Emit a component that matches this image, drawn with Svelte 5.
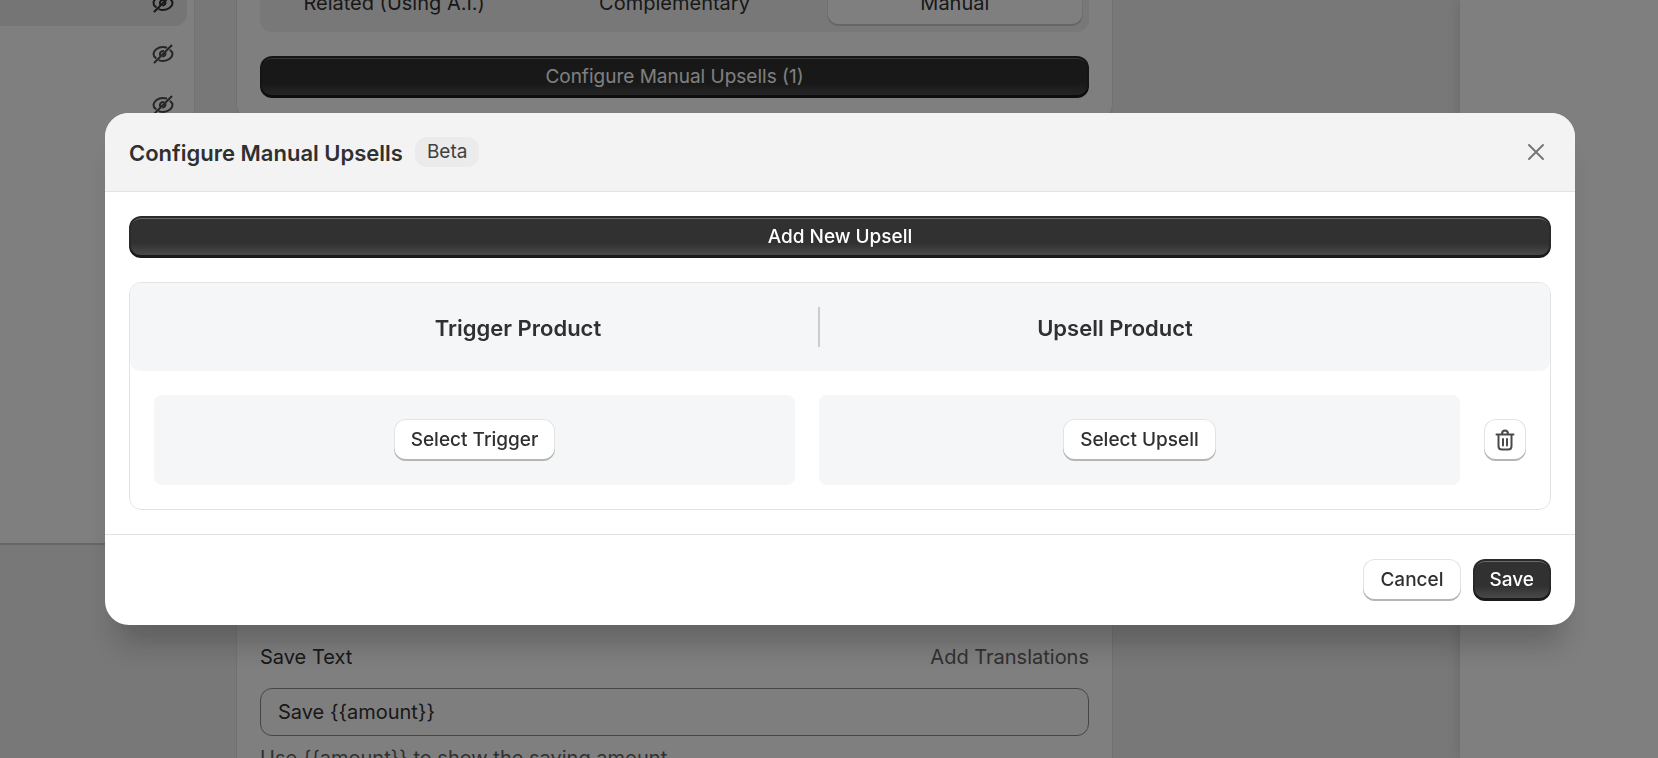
<script lang="ts">
  type Row = { id: number };

  const placements = ['Related (Using A.I.)', 'Complementary', 'Manual'];
  const blocks = [
    { id: 1, selected: true },
    { id: 2, selected: false },
    { id: 3, selected: false },
  ];

  let placement = $state('Manual');
  let saveText = $state('Save {{amount}}');
  let open = $state(true);
  let rows = $state<Row[]>([{ id: 1 }]);

  function addRow() {
    rows.push({ id: Date.now() });
  }

  function removeRow(id: number) {
    rows = rows.filter((row) => row.id !== id);
  }
</script>

<div class="page">
  <aside class="sidebar">
    <ul class="block-list">
      {#each blocks as block (block.id)}
        <li class="block" class:selected={block.selected}>
          <button class="icon-button" aria-label="Show block">
            <svg viewBox="0 0 22 20" width="22" height="20" fill="none" stroke="currentColor" stroke-width="2" stroke-linecap="round">
              <path d="M3.800 14C2.400 12.900 1.500 11.500 1.500 10C1.500 6.600 5.700 3 11 3c1.300 0 2.300.2 3.300.5" />
              <path d="M18.300 6.200C19.700 7.200 20.500 8.600 20.500 10c0 3.400-4.200 7-9.500 7-1.400 0-2.500-.2-3.600-.6" />
              <path d="M2.500 18.500 19.500 1.500" />
              <path d="M8 11c-.5-2.200 1-4 3.200-4" />
              <path d="M14 9c.5 2.300-1 4-3.200 4z" fill="currentColor" stroke-width="1" />
            </svg>
          </button>
        </li>
      {/each}
    </ul>
  </aside>

  <main class="editor">
    <section class="card placement-card">
      <div class="segments">
        {#each placements as name}
          <button class="segment" class:active={placement === name} onclick={() => (placement = name)}>
            {name}
          </button>
        {/each}
      </div>
      <button class="btn primary wide light" onclick={() => (open = true)}>
        Configure Manual Upsells ({rows.length})
      </button>
    </section>

    <section class="card text-card">
      <div class="label-row">
        <label for="save-text">Save Text</label>
        <a href="#translations">Add Translations</a>
      </div>
      <input id="save-text" type="text" bind:value={saveText} />
      <p class="help">Use {'{{amount}}'} to show the saving amount</p>
    </section>
  </main>

  <aside class="preview"></aside>
</div>

{#if open}
  <div class="backdrop">
    <div class="modal" role="dialog" aria-modal="true" aria-labelledby="modal-title">
      <header class="modal-header">
        <h2 id="modal-title">Configure Manual Upsells</h2>
        <span class="badge">Beta</span>
        <button class="icon-button close" aria-label="Close" onclick={() => (open = false)}>
          <svg viewBox="0 0 18 18" width="18" height="18" fill="none" stroke="currentColor" stroke-width="2" stroke-linecap="round">
            <path d="M2 2 16 16M16 2 2 16" />
          </svg>
        </button>
      </header>

      <div class="modal-body">
        <button class="btn primary wide" onclick={addRow}>Add New Upsell</button>

        <div class="upsells">
          <div class="upsells-head">
            <h3>Trigger Product</h3>
            <span class="divider"></span>
            <h3>Upsell Product</h3>
          </div>
          {#each rows as row (row.id)}
            <div class="upsell-row">
              <div class="slot"><button class="btn">Select Trigger</button></div>
              <div class="slot"><button class="btn">Select Upsell</button></div>
              <button class="btn trash" aria-label="Delete upsell" onclick={() => removeRow(row.id)}>
                <svg viewBox="0 0 20 22" width="20" height="22" fill="none" stroke="currentColor" stroke-width="2" stroke-linecap="round">
                  <path d="M1.500 5.500h17M7 5C7 2.900 8.300 1.500 10 1.500S13 2.900 13 5" />
                  <path d="M3.500 6v11c0 2.200 1.300 3.500 3.500 3.500h6c2.200 0 3.500-1.300 3.500-3.500V6" />
                  <path d="M8 10v6.500M12 10v6.500" />
                </svg>
              </button>
            </div>
          {/each}
        </div>
      </div>

      <footer class="modal-footer">
        <button class="btn" onclick={() => (open = false)}>Cancel</button>
        <button class="btn primary" onclick={() => (open = false)}>Save</button>
      </footer>
    </div>
  </div>
{/if}

<style>
  :global(body) {
    margin: 0;
    background: #f1f1f1;
  }

  .page,
  .backdrop {
    font-family: Inter, 'Liberation Sans', sans-serif;
    font-size: 20px;
    line-height: 24px;
    color: #303030;
  }

  .page *,
  .backdrop * {
    box-sizing: border-box;
  }

  .page {
    display: flex;
    height: 100vh;
    overflow: hidden;
  }

  button,
  input {
    font: inherit;
    color: inherit;
  }

  h2,
  h3,
  p,
  ul {
    margin: 0;
    padding: 0;
  }

  .sidebar {
    flex: 0 0 195px;
    align-self: flex-start;
    height: 545px;
    background: #fff;
    border-right: 1px solid #e6e6e6;
    border-bottom: 2px solid #cfcfcf;
  }

  /* scrolled so that the selected block is cut by the top edge */
  .block-list {
    display: flex;
    flex-direction: column;
    gap: 3px;
    margin-top: -22px;
    padding-right: 7px;
    list-style: none;
  }

  .block {
    display: flex;
    align-items: center;
    justify-content: flex-end;
    height: 48px;
    padding: 2px 13px 0 0;
    border-radius: 0 12px 12px 0;
    color: #4a4a4a;
  }

  .block.selected {
    background: #ebebeb;
    color: #303030;
  }

  .icon-button {
    display: flex;
    padding: 0;
    border: none;
    background: none;
    cursor: pointer;
  }

  .editor {
    flex: 1;
    display: flex;
    flex-direction: column;
    padding: 0 347px 0 41px;
  }

  .card {
    background: #fff;
    border-radius: 18px;
    padding: 24px;
    box-shadow: inset 0 0 0 1px #e3e3e3, 0 1px 0 #d4d4d4;
  }

  .placement-card {
    display: flex;
    flex-direction: column;
    gap: 24px;
    margin-top: -52px;
  }

  .segments {
    display: grid;
    grid-template-columns: repeat(3, 1fr);
    gap: 24px;
    padding: 6px;
    border-radius: 12px;
    background: #f1f1f1;
  }

  .segment {
    height: 48px;
    padding: 2px 12px 0;
    border: none;
    border-radius: 12px;
    background: none;
    font-size: 20px;
    cursor: pointer;
  }

  .segment.active {
    background: #fff;
    box-shadow: inset 0 -2px 0 #ccc, inset 0 0 0 1px #e3e3e3;
  }

  .text-card {
    flex: 0 0 auto;
    margin-top: 476px;
    padding-top: 47px;
  }

  .label-row {
    display: flex;
    justify-content: space-between;
    margin-bottom: 19px;
  }

  .label-row a {
    color: #616161;
    text-decoration: none;
  }

  input {
    display: block;
    width: 100%;
    height: 48px;
    padding: 0 17px;
    border: 1px solid #8a8a8a;
    border-radius: 12px;
    background: #fdfdfd;
  }

  .help {
    margin-top: 10px;
    color: #616161;
  }

  .preview {
    flex: 0 0 198px;
    background: #fff;
    box-shadow: 0 0 14px rgba(0, 0, 0, 0.15);
  }

  .backdrop {
    position: fixed;
    inset: 0;
    box-sizing: border-box;
    padding: 113px 83px 0 105px;
    background: rgba(0, 0, 0, 0.5);
  }

  .modal {
    overflow: hidden;
    border-radius: 24px;
    background: #fff;
    box-shadow: 0 30px 30px -12px rgba(26, 26, 26, 0.28);
  }

  .modal-header {
    display: flex;
    align-items: center;
    gap: 12px;
    padding: 24px;
    border-bottom: 1px solid #e3e3e3;
    background: #f3f3f3;
  }

  h2,
  h3 {
    padding-top: 2px;
    font-size: 22px;
    line-height: 28px;
    font-weight: 600;
  }

  .badge {
    padding: 3px 12px;
    border-radius: 12px;
    background: #ebebeb;
    font-size: 19px;
    color: #404040;
  }

  .close {
    margin-left: auto;
    margin-right: 6px;
    color: #777;
  }

  .modal-body {
    display: flex;
    flex-direction: column;
    gap: 24px;
    padding: 24px;
  }

  .btn {
    height: 42px;
    padding: 0 17px;
    border: none;
    border-radius: 12px;
    background: #fff;
    box-shadow: inset 0 -2px 0 #b5b5b5, inset 0 0 0 1px #e3e3e3;
    font-size: 19px;
    font-weight: 500;
    cursor: pointer;
  }

  .btn.primary {
    background: linear-gradient(180deg, rgba(48, 48, 48, 0) 64%, rgba(255, 255, 255, 0.15) 100%), #303130;
    box-shadow: inset 0 -3px 0 #1a1a1a, inset 0 0 0 2px #2a2a2a, inset 0 3px 0 #6a6a6a;
    color: #fff;
  }

  .btn.wide {
    width: 100%;
  }

  .btn.light {
    font-weight: 400;
  }

  .upsells {
    border: 1px solid #e3e3e3;
    border-radius: 12px;
  }

  .upsells-head {
    display: grid;
    grid-template-columns: 600fr 2px 590fr;
    align-items: center;
    padding: 24px 140px 24px 88px;
    border-radius: 11px;
    background: #f5f6f8;
    text-align: center;
  }

  .divider {
    height: 40px;
    background: #ccc;
  }

  .upsell-row {
    display: flex;
    align-items: center;
    gap: 24px;
    padding: 24px;
  }

  .slot {
    flex: 1;
    display: flex;
    justify-content: center;
    padding: 24px;
    border-radius: 8px;
    background: #f5f6f8;
  }

  .btn.trash {
    display: flex;
    align-items: center;
    justify-content: center;
    width: 42px;
    padding: 0;
    color: #4a4a4a;
  }

  .modal-footer {
    display: flex;
    justify-content: flex-end;
    gap: 12px;
    padding: 24px;
    border-top: 1px solid #e3e3e3;
  }
</style>
